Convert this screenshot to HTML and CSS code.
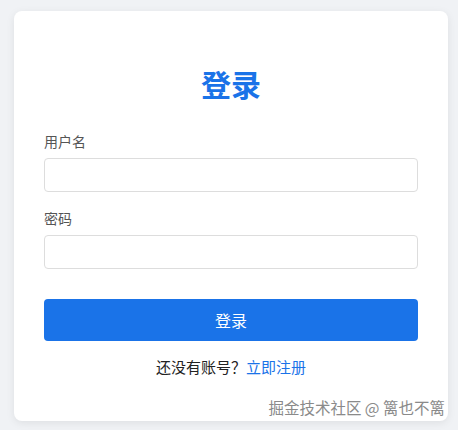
FILE: index.html
```html
<!DOCTYPE html>
<html lang="zh-CN">
<head>
<meta charset="utf-8">
<title>登录</title>
<link rel="stylesheet" href="styles.css">
</head>
<body>
<div class="card">
  <h2 class="title">登录</h2>
  <form class="form">
    <div class="field">
      <label class="label">用户名</label>
      <input class="input" type="text">
    </div>
    <div class="field">
      <label class="label">密码</label>
      <input class="input" type="password">
    </div>
    <button class="btn" type="button">登录</button>
  </form>
  <p class="footer">还没有账号？<a class="link" href="#">立即注册</a></p>
  <div class="watermark">掘金技术社区 @ 篱也不篱</div>
</div>
</body>
</html>
```
FILE: styles.css
```css
* { box-sizing: border-box; }
html, body { margin: 0; padding: 0; }
body {
  background: #f0f2f5;
  font-family: "Noto Sans CJK SC", "Noto Sans", sans-serif;
  width: 458px;
  height: 430px;
  overflow: hidden;
}
.card {
  position: relative;
  margin: 11px 10px 0 14px;
  height: 410px;
  background: #fff;
  border-radius: 8px;
  box-shadow: 0 2px 8px rgba(0,0,0,0.08);
  padding: 55px 30px 0;
}
.title {
  margin: 0;
  text-align: center;
  color: #1a73e8;
  font-size: 30px;
  font-weight: 700;
  line-height: 34px;
}
.form {
  margin-top: 31px;
  display: flex;
  flex-direction: column;
}
.field {
  display: flex;
  flex-direction: column;
  margin-bottom: 16px;
}
.field + .field { margin-bottom: 30px; }
.label {
  font-size: 14px;
  line-height: 20px;
  color: #555;
  margin-bottom: 7px;
}
.input {
  height: 34px;
  border: 1px solid #ddd;
  border-radius: 4px;
  padding: 0 10px;
  font-size: 14px;
  background: #fff;
  outline: none;
}
.btn {
  height: 42px;
  border: none;
  border-radius: 4px;
  background: #1a73e8;
  color: #fff;
  font-family: inherit;
  font-size: 16px;
}
.footer {
  margin: 16px 0 0;
  text-align: center;
  font-size: 15px;
  line-height: 20px;
  color: #222;
}
.link {
  color: #1a73e8;
  text-decoration: none;
}
.watermark {
  position: absolute;
  right: 3px;
  bottom: 3px;
  font-size: 15.5px;
  line-height: 22px;
  color: #8a8a8a;
  white-space: nowrap;
}
```
